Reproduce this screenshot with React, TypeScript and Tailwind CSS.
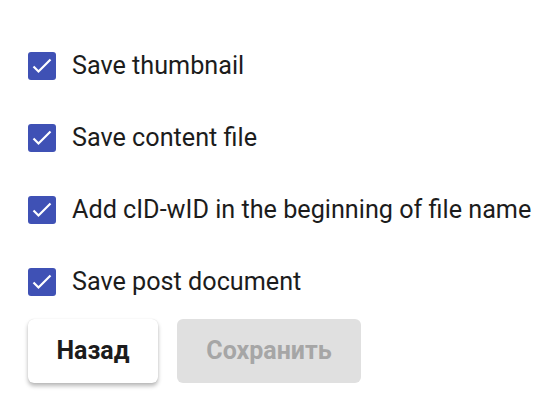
import { useState } from 'react';

const OPTIONS = [
  'Save thumbnail',
  'Save content file',
  'Add cID-wID in the beginning of file name',
  'Save post document',
];

function CheckIcon() {
  return (
    <svg width="28" height="28" viewBox="0 0 28 28" fill="none">
      <path d="M5.5 14.5l5 5L22.5 7.5" stroke="#fff" strokeWidth="2.2" />
    </svg>
  );
}

export default function App() {
  const [checked, setChecked] = useState([true, true, true, true]);

  return (
    <div className="w-[546px] h-[404px] bg-white font-['Roboto',sans-serif] text-[#1c1c1c] pl-[28px] pt-[52px]">
      <div className="flex flex-col gap-[44px]">
        {OPTIONS.map((label, i) => (
          <label key={label} className="flex items-center gap-[16px] h-[28px] cursor-pointer">
            <button
              onClick={() => setChecked(c => c.map((v, j) => (j === i ? !v : v)))}
              className="w-[28px] h-[28px] rounded-[3px] bg-[#3f51b5] flex items-center justify-center shrink-0"
            >
              {checked[i] && <CheckIcon />}
            </button>
            <span className="text-[25.2px] leading-none">{label}</span>
          </label>
        ))}
      </div>

      {/* Actions */}
      <div className="flex gap-[19px] mt-[23px]">
        <button className="w-[130px] h-[64px] rounded-[6px] bg-white shadow-[0_3px_4px_rgba(0,0,0,0.28),0_0_1px_rgba(0,0,0,0.15)] text-[25px] font-bold text-[#1c1c1c]">
          Назад
        </button>
        <button disabled className="w-[184px] h-[64px] rounded-[6px] bg-[#e0e0e0] text-[25px] font-bold text-[#a6a6a6]">
          Сохранить
        </button>
      </div>
    </div>
  );
}
